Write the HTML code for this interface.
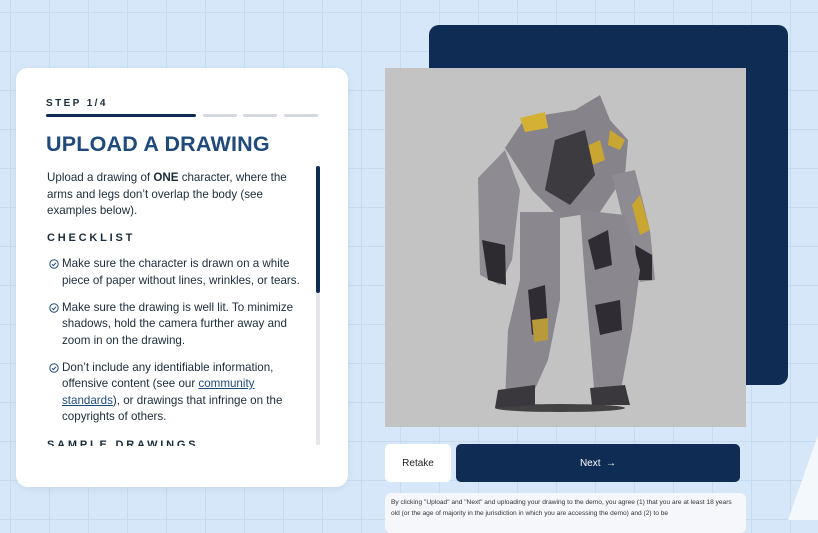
<!DOCTYPE html>
<html><head><style>
*{margin:0;padding:0;box-sizing:border-box}
body{width:818px;height:520px;overflow:hidden;position:relative;font-family:"Liberation Sans",sans-serif;
background-color:#d5e7f8;
background-image:linear-gradient(#c6dbf0 1px,transparent 1px),linear-gradient(90deg,#c6dbf0 1px,transparent 1px);
background-size:39px 39px;background-position:10px 12px;}
.card{position:absolute;left:16px;top:68px;width:332px;height:419px;background:#fff;border-radius:12px;box-shadow:0 2px 8px rgba(0,0,0,.06)}
.step{position:absolute;left:46px;top:98px;font-size:10px;font-weight:bold;letter-spacing:2.4px;color:#1c2b3a}
.bar{position:absolute;top:114px;height:3px;border-radius:2px;background:#d4d8de}
h1{position:absolute;left:46px;top:132px;font-size:21.5px;font-weight:bold;color:#1f4a7c;letter-spacing:.2px}
.body{position:absolute;left:47px;top:170px;width:262px;font-size:11.6px;line-height:16.5px;color:#1c2b3a}
.h2{font-size:11px;font-weight:bold;letter-spacing:2.8px;margin:10px 0 10px}
.li{position:relative;padding-left:15px;margin-bottom:10.5px}
.li svg{position:absolute;left:2px;top:3px}
a{color:#1f4a7c;text-decoration:underline}
.sb{position:absolute;left:316px;top:166px;width:4px;height:279px;border-radius:2px;background:#e4e6ea}
.sb i{display:block;width:4px;height:127px;border-radius:2px;background:#0e2d55}
.navy{position:absolute;left:429px;top:25px;width:359px;height:360px;background:#0f2c54;border-radius:10px}
.img{position:absolute;left:385px;top:68px;width:361px;height:359px;background:#c3c3c3}
.btn{position:absolute;top:444px;height:38px;border-radius:5px;font-size:10px;display:flex;align-items:center;justify-content:center}
.disc{position:absolute;left:385px;top:493px;width:361px;height:40px;background:#f5f7fa;border-radius:6px;font-size:6.6px;line-height:11px;color:#333;padding:4px 6px}
</style></head><body>
<svg style="position:absolute;left:0;top:0" width="818" height="520"><polygon points="818,435 818,520 788,520" fill="#f3f8fd"/></svg>
<div class="card"></div>
<div class="step">STEP 1/4</div>
<div class="bar" style="left:46px;width:150px;background:#0f2c54"></div>
<div class="bar" style="left:203px;width:34px"></div>
<div class="bar" style="left:243px;width:34px"></div>
<div class="bar" style="left:284px;width:34px"></div>
<h1>UPLOAD A DRAWING</h1>
<div class="body">
<p>Upload a drawing of <b>ONE</b> character, where the<br>arms and legs don’t overlap the body (see<br>examples below).</p>
<div class="h2">CHECKLIST</div>
<div class="li"><svg width="10" height="10" viewBox="0 0 10 10"><circle cx="5" cy="5" r="4.2" fill="none" stroke="#1f4a7c" stroke-width="1"/><path d="M3 5.2l1.4 1.4L7 3.8" fill="none" stroke="#1f4a7c" stroke-width="1"/></svg>Make sure the character is drawn on a white<br>piece of paper without lines, wrinkles, or tears.</div>
<div class="li"><svg width="10" height="10" viewBox="0 0 10 10"><circle cx="5" cy="5" r="4.2" fill="none" stroke="#1f4a7c" stroke-width="1"/><path d="M3 5.2l1.4 1.4L7 3.8" fill="none" stroke="#1f4a7c" stroke-width="1"/></svg>Make sure the drawing is well lit. To minimize<br>shadows, hold the camera further away and<br>zoom in on the drawing.</div>
<div class="li"><svg width="10" height="10" viewBox="0 0 10 10"><circle cx="5" cy="5" r="4.2" fill="none" stroke="#1f4a7c" stroke-width="1"/><path d="M3 5.2l1.4 1.4L7 3.8" fill="none" stroke="#1f4a7c" stroke-width="1"/></svg>Don’t include any identifiable information,<br>offensive content (see our <a>community</a><br><a>standards</a>), or drawings that infringe on the<br>copyrights of others.</div>
</div>
<div style="position:absolute;left:47px;top:438px;width:270px;height:8px;overflow:hidden"><div style="font-size:11px;font-weight:bold;letter-spacing:2.8px;color:#1c2b3a;line-height:14px">SAMPLE DRAWINGS</div></div>
<div class="sb"><i></i></div>
<div class="navy"></div>
<div class="img"></div>
<svg style="position:absolute;left:0;top:0" width="818" height="520">
<ellipse cx="560" cy="408" rx="65" ry="4" fill="#222" opacity=".8"/>
<polygon points="505,148 525,118 575,110 600,95 610,120 628,140 625,175 600,212 560,218 532,190" fill="#86838a"/>
<polygon points="520,118 545,112 548,128 525,132" fill="#d4b035"/>
<polygon points="578,150 600,140 605,160 585,168" fill="#c9a532"/>
<polygon points="610,130 625,140 620,150 608,145" fill="#c9a532"/>
<polygon points="555,140 585,130 595,175 570,205 545,190" fill="#3d3a40"/>
<polygon points="478,178 505,150 520,190 512,260 500,285 480,275" fill="#8e8b92"/>
<polygon points="482,240 505,245 506,285 488,280" fill="#2d2b30"/>
<polygon points="612,175 635,170 650,230 655,280 640,282 628,240" fill="#8e8b92"/>
<polygon points="635,245 652,255 652,280 638,280" fill="#2d2b30"/>
<polygon points="640,195 650,230 640,235 632,205" fill="#c9a532"/>
<polygon points="520,212 560,212 560,300 548,360 530,400 505,402 508,330 520,280" fill="#8a878e"/>
<polygon points="528,290 545,285 548,330 532,335" fill="#2f2d33"/>
<polygon points="532,320 548,318 548,340 534,342" fill="#b89a3a"/>
<polygon points="580,210 625,215 640,270 632,330 620,395 595,400 590,340 585,280" fill="#8a878e"/>
<polygon points="588,240 608,230 612,265 595,270" fill="#2f2d33"/>
<polygon points="595,305 620,300 622,330 600,335" fill="#2f2d33"/>
<polygon points="498,390 535,385 535,405 495,408" fill="#3a383d"/>
<polygon points="590,388 625,385 630,405 592,405" fill="#3a383d"/>
</svg>
<div class="btn" style="left:385px;width:66px;background:#fff;color:#222">Retake</div>
<div class="btn" style="left:456px;width:284px;background:#0f2c54;color:#fff">Next &nbsp;→</div>
<div class="disc">By clicking "Upload" and "Next" and uploading your drawing to the demo, you agree (1) that you are at least 18 years old (or the age of majority in the jurisdiction in which you are accessing the demo) and (2) to be</div>
</body></html>
